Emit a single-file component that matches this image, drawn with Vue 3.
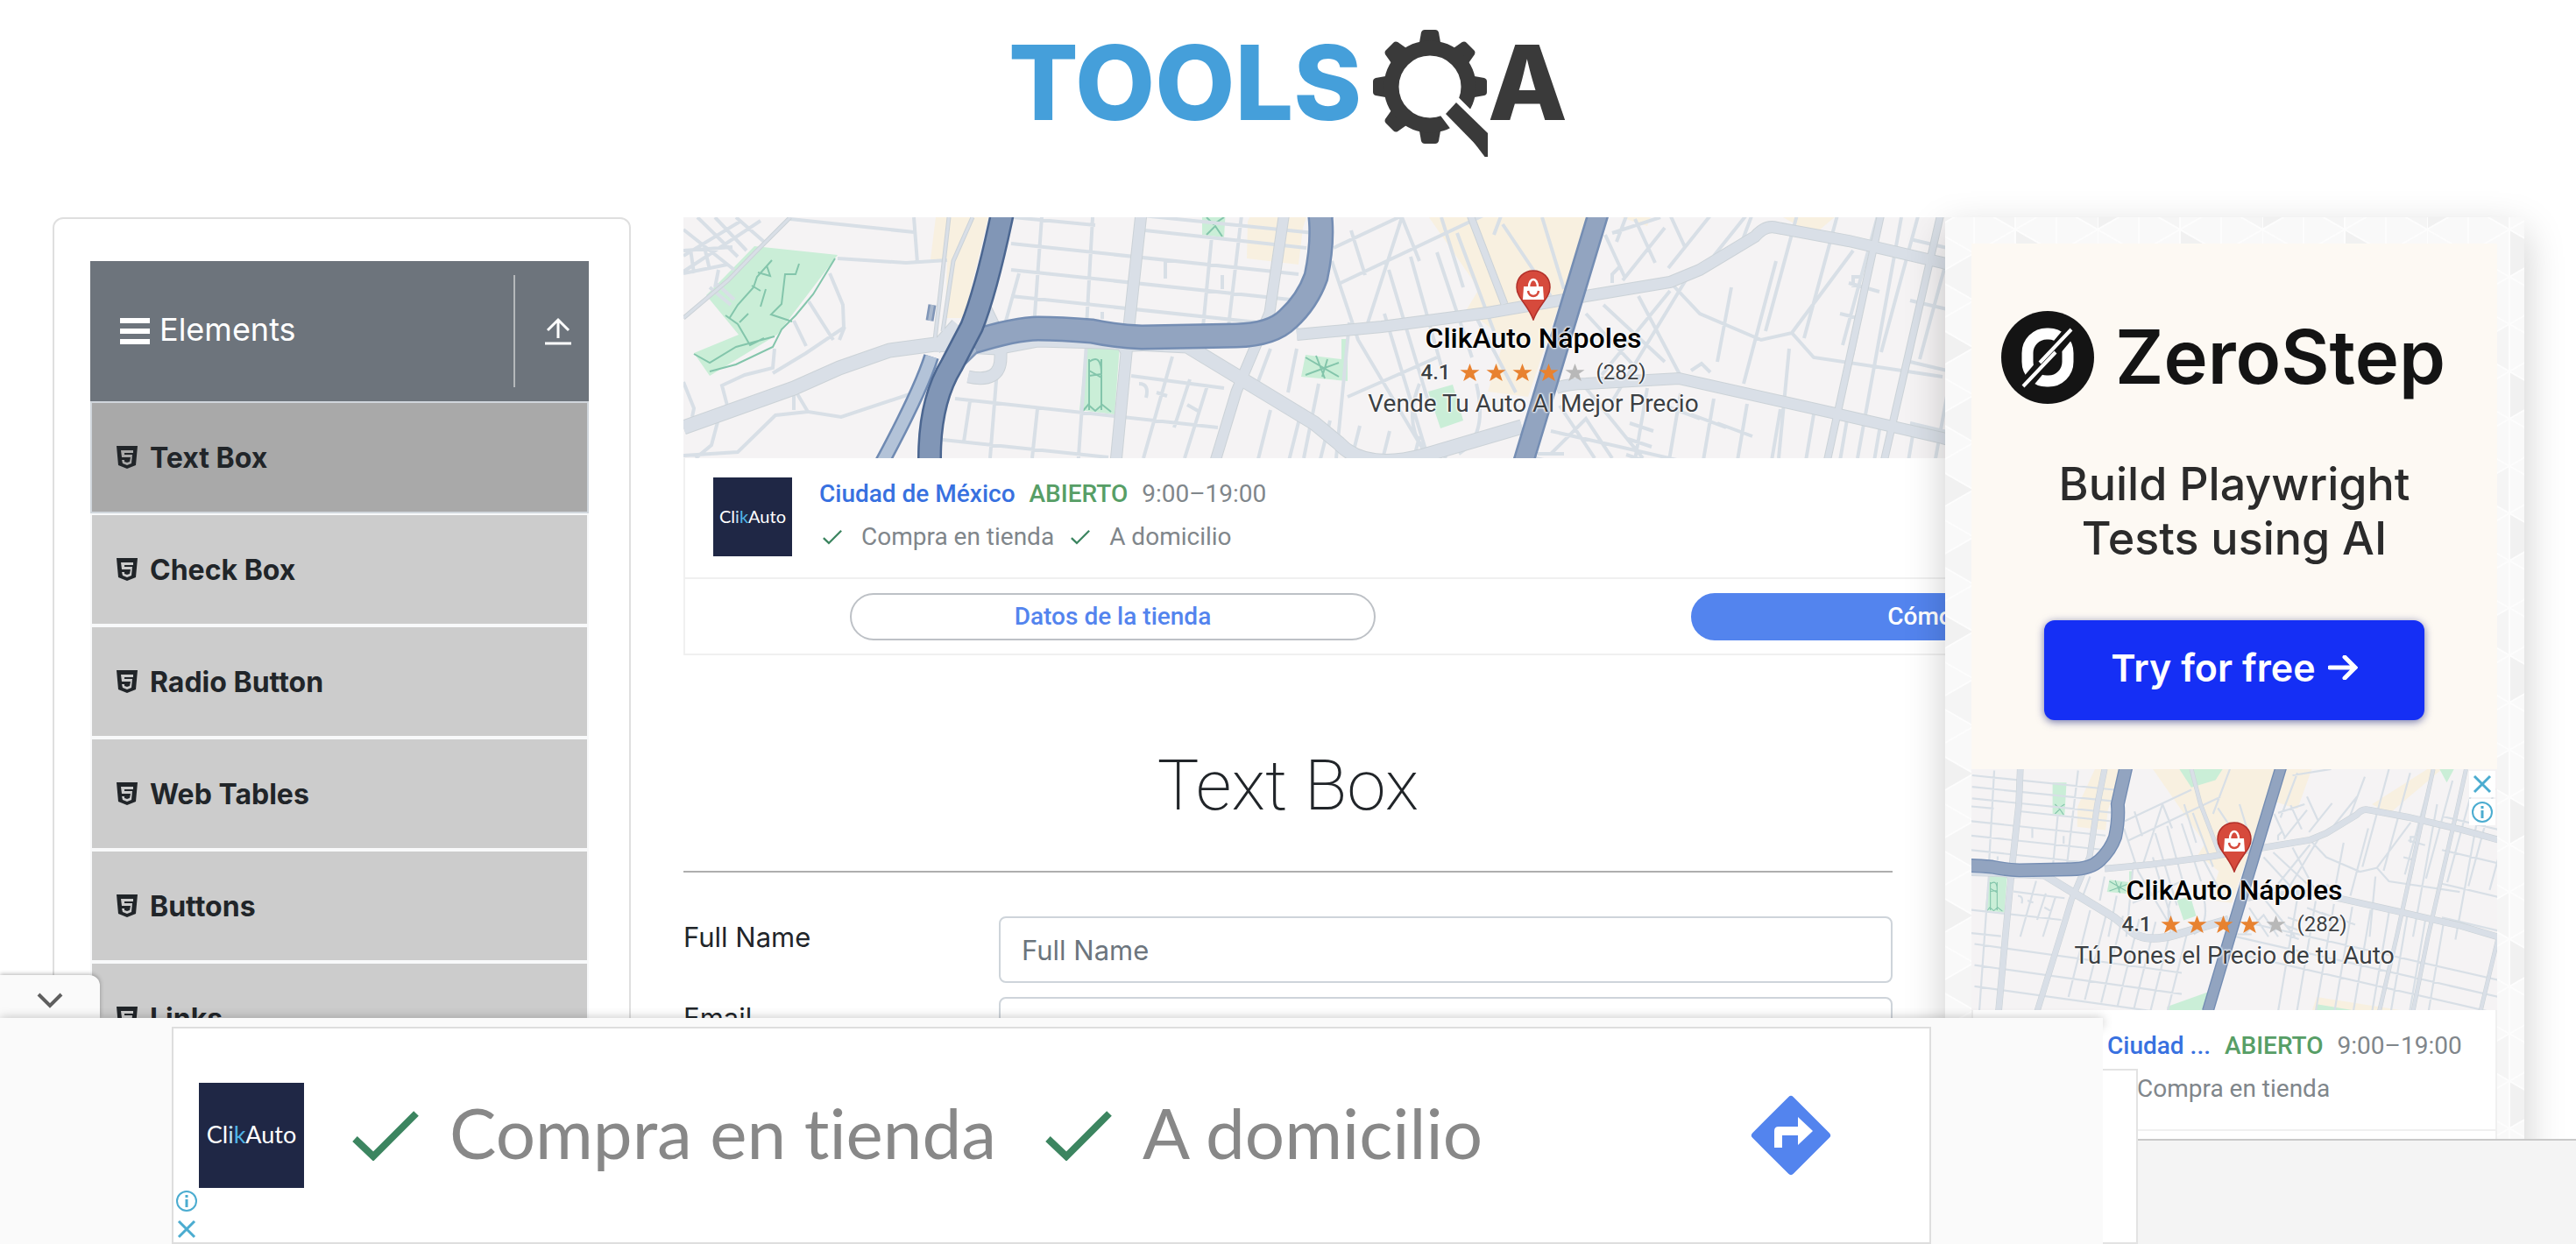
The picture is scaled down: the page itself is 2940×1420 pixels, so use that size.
<script setup>
import { ref } from 'vue'

const menu = ['Text Box', 'Check Box', 'Radio Button', 'Web Tables', 'Buttons', 'Links']
const active = ref('Text Box')
const fullName = ref('')
const email = ref('')

const maps = [
  { id: 'wide', box: '0 0 1940 275', move: '' },
  { id: 'small', box: '0 0 600 275', move: 'translate(-233 40) scale(.55)' },
]

// A run of parallel streets, each one shifted from the first by (dx, dy).
function run(x1, y1, x2, y2, dx, dy, count) {
  let d = ''
  for (let i = 0; i < count; i++) {
    d += `M${x1 + dx * i} ${y1 + dy * i}L${x2 + dx * i} ${y2 + dy * i}`
  }
  return d
}

const parks = [
  'M81 33L176 43 107 134 30 181 12 155 63 134 26 89 46 69Z',
  'M460 144L498 146 492 225 452 220Z',
  'M592 -45H621L617 23 592 20Z',
  'M710 157L751 162V139H758V187L705 182Z',
  'M850 199L878 191 890 232 864 241Z',
  'M855 -73H945L930 -50 880 -35Z',
  'M830 420L928 385 915 430H830Z',
  'M1395 -73H1425L1410 -45Z',
  'M1140 415L1230 430H1140Z',
]
const beige = [
  'M288 0H348L320 115H299L301 49 282 48Z',
  'M644 5L680 -73H735L707 12 702 54 643 47Z',
  'M800 -73H1058L964 205 918 199 937 139 894 105 908 82Z',
  'M1060 -73H1130L1100 10 1040 -10Z',
  'M1255 0L1370 -73H1400L1290 20Z',
  'M1140 400L1330 430H1130Z',
]
const trails =
  'M101 49L84 68 80 80 62 100 52 116M95 55l4 12-14-4M173 47L148 88 128 112 112 128 102 148 60 168 30 176M12 156L30 166 60 148 104 136M132 53l-4 12-12 0-4 34-12 12 24 8M48 112L62 122 76 146 92 138M78 78l10 6M94 82l-6 20M64 120l10-10M463 162V220M477 162V220M463 175l14 8M463 165q14-10 14 14l-14 2M456 221l6-7 8 7 8-7 10 8M597 0l8 8 12-8M597 20l10-10 8 12M710 160l38 22M748 166l-38 14M722 158l10 26M735 162l-6 20'
const streets = [
  'M122 2L263 17M263 0L267 52M176 47L254 52 301 49M167 64L182 100 183 126 140 155 102 178M143 96L171 140M126 118L140 147M0 14L58 60M16 0L62 45M36 0L72 38M60 0L92 28M0 44L66 4M0 62L88 4M0 38L56 34M12 64L8 36M30 60L24 34M0 64L50 54M30 80L54 100M36 74L58 94M40 60L36 80M0 188L12 218 10 228M184 125L178 140',
  'M126 195L142 222 180 228 270 198M142 222L105 226 62 268 0 272M40 230L32 260 14 275M50 215L44 192 70 180 102 172 104 150M126 195V220',
  run(374, 30, 702, 65, 0, 30, 3),
  'M376 0L470 9M527 15L711 35M414 -70L400 125M471 -70L460 125M603 22L593 125M645 -70L622 125M383 64L367 122M550 70V50M615 82V66M478 108v8',
  run(425, -60, 720, -30, 0, 24, 3),
  'M310 207L610 240M296 254L485 274M511 181L617 195M360 149L350 275M327 210L320 256M404 219L398 275M460 144L440 430M558 159L525 275M598 192L572 275M578 185L560 240M540 200l12 4M575 214l14 8M520 190q12 0 8 16',
  run(670, 220, 625, 400, 34, 6, 7),
  run(430, 290, 860, 350, 0, 44, 3),
  'M670 150L655 190M700 150L690 200M742 35L880 -30M750 75L940 -15M762 15L778 66M740 50L770 140 850 275M778 130L820 0M820 0L840 50M805 60L850 210M830 45L865 170M860 40L900 160M883 18L925 130M800 110L850 275M760 120L745 275M725 190L708 275M865 0L890 80M935 8L990 90M980 0L1005 82M900 105L950 200M758 205L860 160M840 190q-20 50 10 80M905 190q14 60-20 80M1060 18L1115 0M1090 -60L1170 -73',
  run(1052, 20, 1075, 70, 34, -18, 3),
  'M1126 74L1160 110 1230 140 1265 132 1290 160 1437 182M1265 132L1335 38M1262 150L1250 275M1126 84L1048 180M1050 100L1120 165M1030 110L1090 175M1090 90L1140 185M1145 70L1060 210M1060 75v-10l10-10',
  run(1120, 12, 1072, 72, 52, -14, 3),
  run(1100, 195, 1060, 430, 38, 6, 9),
  run(1080, 235, 1107, 244, -2, 18, 3),
  run(1120, 215, 1160, 230, 30, 10, 3),
  'M990 270L1030 230 1060 275M1000 215L1040 275M1030 195L1095 275M975 270h30M1196 80L1180 165M1247 50L1210 190M1330 75l35 10M1320 110l25 6M1340 130l-6 28M1335 80v-12h10M1150 175l12-8 10 10',
  run(1290, -73, 1235, 130, 44, 8, 8),
  run(1390, 0, 1340, 275, 88, 6, 7),
  run(1400, 25, 1930, 150, 0, 70, 4),
  run(930, 300, 1540, 440, 30, -28, 3),
  run(960, -73, 925, 20, 140, 8, 3),
].join('')

const greyRoads = [
  { d: 'M0 240L126 195 178 172 235 152 287 145 357 149 405 140 475 142 575 147 720 235 748 258Q778 290 845 272L957 239', w: 17 },
  { d: 'M287 150L312 122M345 105L362 140 362 160Q362 190 325 182', w: 15 },
  { d: 'M525 -73L522 0 508 129 494 275 480 430', w: 14 },
  { d: 'M700 -73L685 0 669 109 631 199 608 275 560 430', w: 13 },
  { d: 'M575 147L500 150 506 160', w: 8 },
  { d: 'M700 134L797 125 918 109 1000 95 1126 74 1160 60 1223 22Q1235 8 1248 12L1330 27 1437 52 1940 190', w: 14 },
  { d: 'M996 195Q1010 190 1030 190L1136 184 1306 222 1437 252 1600 300', w: 14 },
  { d: 'M1382 -73L1366 0 1306 275 1270 430', w: 9 },
  { d: 'M1450 -73L1434 0 1371 275 1340 430M1600 -73L1480 430', w: 9 },
  { d: 'M880 -73L899 0 937 99', w: 9 },
  { d: 'M122 0L82 40 51 72 0 115M303 0L287 140M330 0L308 50 296 130', w: 5 },
]
const highways = [
  { d: 'M283 159Q270 200 224 285', w: 18, edge: '#6f8ab2', fill: '#b3c3d8' },
  { d: 'M284 100L281 118M312 172L345 140', w: 9, edge: '#7f95b7', fill: '#a9b8cd' },
  { d: 'M331 142Q380 127 405 127T466 130Q495 136 523 137L631 135Q672 134 690 116 712 96 722 68 730 30 727 0L745 -80', w: 29, edge: '#748db3', fill: '#92a4c0' },
  { d: 'M1067 -80L960 275 914 430', w: 25, edge: '#748db3', fill: '#92a4c0' },
  { d: 'M376 -73L363 0Q345 85 329 125L306 169Q281 210 281 275V430', w: 28, edge: '#4b6690', fill: '#8196b6' },
]
const html5 =
  'M0 0H24L22 22 12 26 2 22ZM5 5L6 13H16L15 18 12 19 9 18V16H6L7 20 12 22 17 20 18 10H9V8H19V5Z'
</script>

<template>
  <div class="page">
    <svg class="defs" width="0" height="0" aria-hidden="true">
      <defs>
        <g id="city">
          <rect x="-100" y="-100" width="2200" height="600" fill="#f5f3f4" />
          <path v-for="d in beige" :key="d" :d="d" fill="#f8f0e0" />
          <path v-for="d in parks" :key="d" :d="d" fill="#caeed7" />
          <path :d="trails" fill="none" stroke="#83c5ab" stroke-width="2" />
          <path :d="streets" fill="none" stroke="#d8dfe6" stroke-width="4" />
          <path v-for="r in greyRoads" :key="r.d" :d="r.d" fill="none" stroke="#cbd2d7" :stroke-width="r.w" />
          <path v-for="r in greyRoads" :key="r.d + 'f'" :d="r.d" fill="none" stroke="#d9dfe7" :stroke-width="r.w - 2" />
          <template v-for="r in highways" :key="r.d">
            <path :d="r.d" fill="none" :stroke="r.edge" :stroke-width="r.w" />
            <path :d="r.d" fill="none" :stroke="r.fill" :stroke-width="r.w - 5" />
          </template>
        </g>
        <symbol id="pin" viewBox="0 0 40 58">
          <path d="M20 1C9 1 1 9 1 20c0 12 13 20 19 37 6-17 19-25 19-37C39 9 31 1 20 1Z" fill="#d64a3c" stroke="#b1302a" stroke-width="1.500" />
          <path d="M9 19H31L32 34H8Z" fill="#fff" />
          <path d="M15 20C15 8 25 8 25 20" fill="none" stroke="#fff" stroke-width="2.500" />
          <path d="M14 24C15 32 25 32 26 24" fill="none" stroke="#d64a3c" stroke-width="2.500" />
        </symbol>
        <symbol id="star" viewBox="0 0 24 24">
          <path d="M12 1l3 8h9l-7 5 3 9-8-5-8 5 3-9-7-5h9z" />
        </symbol>
        <symbol id="tick" viewBox="0 0 76 58">
          <path d="M3 33L24 53 73 4" fill="none" stroke="#3c8560" stroke-width="8" />
        </symbol>
        <symbol id="info" viewBox="0 0 24 24">
          <circle cx="12" cy="12" r="11" fill="none" stroke="#4bacd0" stroke-width="2" />
          <path d="M12 10v9M12 5v3" stroke="#4bacd0" stroke-width="3" />
        </symbol>
        <symbol id="cross" viewBox="0 0 24 24">
          <path d="M3 3L21 21M21 3L3 21" stroke="#4bacd0" stroke-width="3" />
        </symbol>
      </defs>
    </svg>

    <header class="top">
      <a class="brand" href="#" aria-label="TOOLSQA">
        <span class="tools">TOOLS</span>
        <svg class="gear" viewBox="0 0 132 145" width="132" height="145">
          <g fill="#3a3a3a">
            <path
              v-for="a in 8"
              :key="a"
              d="M53 20L56 3Q57 0 60 0H72Q75 0 76 3L79 20Z"
              :transform="`rotate(${a * 45} 66 65)`"
            />
          </g>
          <circle cx="66" cy="65" r="44" fill="none" stroke="#3a3a3a" stroke-width="17" />
          <path d="M96 83L140 127V170L84 96Z" fill="#3a3a3a" stroke="#fff" stroke-width="12" />
          <path d="M96 83L132 118V145L84 96Z" fill="#3a3a3a" />
        </svg>
        <span class="last">A</span>
      </a>
    </header>

    <main class="columns">
      <nav class="panel">
        <button class="group" type="button">
          <svg viewBox="0 0 34 30" width="34" height="30"><path d="M0 3H34M0 15H34M0 27H34" stroke="#fff" stroke-width="6" /></svg>
          <span class="group-name">Elements</span>
          <span class="group-toggle">
            <svg viewBox="0 0 30 32" width="30" height="32"><path d="M15 24V3M3 15L15 3 27 15M0 30H30" fill="none" stroke="#fff" stroke-width="3" /></svg>
          </span>
        </button>
        <ul class="menu">
          <li v-for="m in menu" :key="m" :class="{ on: m === active }">
            <a href="#" @click.prevent="active = m">
              <svg viewBox="0 0 24 26" width="24" height="26"><path :d="html5" fill="#212529" fill-rule="evenodd" /></svg>
              {{ m }}
            </a>
          </li>
        </ul>
      </nav>

      <section class="content">
        <article class="ad wide">
          <div class="map">
            <svg class="streets" :viewBox="maps[0].box" preserveAspectRatio="xMidYMin slice"><use href="#city" /></svg>
            <div class="place">
              <svg width="40" height="58"><use href="#pin" /></svg>
              <strong>ClikAuto Nápoles</strong>
              <span class="rating">
                <b>4.1</b>
                <svg v-for="s in 5" :key="s" :class="['star', { off: s === 5 }]" width="23" height="22"><use href="#star" /></svg>
                <i>(282)</i>
              </span>
              <span class="slogan">Vende Tu Auto Al Mejor Precio</span>
            </div>
          </div>
          <div class="shop">
            <div class="clik">Cl<em>i</em><em>k</em>Auto</div>
            <div class="facts">
              <p><a class="city" href="#">Ciudad de México</a><b class="open">ABIERTO</b><span>9:00–19:00</span></p>
              <p class="services">
                <svg class="tick" width="22" height="20"><use href="#tick" /></svg><span>Compra en tienda</span>
                <svg class="tick" width="22" height="20"><use href="#tick" /></svg><span>A domicilio</span>
              </p>
            </div>
          </div>
          <div class="actions">
            <button class="pill" type="button">Datos de la tienda</button>
            <button class="pill solid" type="button">Cómo llegar</button>
          </div>
        </article>

        <h1>Text Box</h1>
        <form class="form" @submit.prevent>
          <label for="full-name">Full Name</label>
          <input id="full-name" v-model="fullName" type="text" placeholder="Full Name" />
          <label for="email">Email</label>
          <input id="email" v-model="email" type="email" />
        </form>
      </section>

      <aside class="side">
        <svg class="weave" width="100%" height="100%" aria-hidden="true">
          <defs>
            <pattern id="tri" width="188" height="162" patternUnits="userSpaceOnUse" x="-14" y="-40">
              <rect width="188" height="162" fill="#f9f9f9" />
              <path d="M0 0L47 27 0 54ZM94 54L141 81 94 108ZM188 108L141 135 188 162Z" fill="#f1f1f1" />
              <path d="M94 0L47 27 94 54ZM0 108L47 81V135ZM141 27L188 0V54Z" fill="#f5f5f5" />
              <path
                d="M0 0V162M47 0V162M94 0V162M141 0V162M0 0L188 108M0 54L188 162M0 108L94 162M94 0L188 54M188 0L0 108M188 54L0 162M188 108L94 162M94 0L0 54"
                stroke="#fdfdfd"
                stroke-width="2"
                fill="none"
              />
            </pattern>
          </defs>
          <rect width="100%" height="100%" fill="url(#tri)" />
        </svg>
        <div class="stack">
          <article class="zero">
            <div class="zero-brand">
              <svg viewBox="0 0 106 108" width="106" height="108">
                <circle cx="53" cy="54" r="53" fill="#141414" />
                <rect x="30" y="27" width="46" height="54" rx="22" fill="none" stroke="#fff" stroke-width="13" />
                <path d="M22 92L84 18" stroke="#141414" stroke-width="15" />
                <path d="M25 87L62 48M44 60L80 22" stroke="#fff" stroke-width="4" />
              </svg>
              <span>ZeroStep</span>
            </div>
            <p>Build Playwright<br />Tests using AI</p>
            <button type="button">
              Try for free
              <svg viewBox="0 0 34 28" width="34" height="28"><path d="M2 14H31M19 2L31 14 19 26" fill="none" stroke="#fff" stroke-width="5" stroke-linecap="round" /></svg>
            </button>
          </article>
          <article class="ad">
            <div class="map">
              <svg class="streets" :viewBox="maps[1].box" preserveAspectRatio="xMidYMin slice"><use href="#city" :transform="maps[1].move" /></svg>
              <div class="place">
                <svg width="40" height="58"><use href="#pin" /></svg>
                <strong>ClikAuto Nápoles</strong>
                <span class="rating">
                  <b>4.1</b>
                  <svg v-for="s in 5" :key="s" :class="['star', { off: s === 5 }]" width="23" height="22"><use href="#star" /></svg>
                  <i>(282)</i>
                </span>
                <span class="slogan">Tú Pones el Precio de tu Auto</span>
              </div>
              <div class="choices">
                <button type="button" aria-label="Cerrar"><svg width="24" height="24"><use href="#cross" /></svg></button>
                <button type="button" aria-label="Información"><svg width="24" height="24"><use href="#info" /></svg></button>
              </div>
            </div>
            <div class="shop">
              <div class="clik">Cl<em>i</em><em>k</em>Auto</div>
              <div class="facts">
                <p><a class="city" href="#">Ciudad ...</a><b class="open">ABIERTO</b><span>9:00–19:00</span></p>
                <p class="services tight">
                  <svg class="tick" width="22" height="20"><use href="#tick" /></svg><span>Compra en tienda</span>
                </p>
              </div>
            </div>
            <div class="actions"></div>
          </article>
        </div>
      </aside>
    </main>

    <footer class="foot"></footer>

    <div class="dock">
      <div class="behind"></div>
      <button class="fold" type="button" aria-label="Ocultar anuncio">
        <svg viewBox="0 0 30 18" width="30" height="18"><path d="M2 2L15 15 28 2" fill="none" stroke="#5f5f5f" stroke-width="4" /></svg>
      </button>
      <div class="lip"></div>
      <div class="tray">
        <article class="banner">
          <div class="clik big">Cl<em>i</em><em>k</em>Auto</div>
          <svg width="76" height="58"><use href="#tick" /></svg>
          <span class="first">Compra en tienda</span>
          <svg width="76" height="58"><use href="#tick" /></svg>
          <span>A domicilio</span>
          <a class="route" href="#" aria-label="Cómo llegar">
            <svg viewBox="0 0 92 92" width="92" height="92">
              <rect x="13" y="13" width="66" height="66" rx="4" fill="#5384ee" transform="rotate(45 46 46)" />
              <path d="M27 60V41Q27 36 32 36H54V25L71 41 54 57V46H36V60Z" fill="#fff" />
            </svg>
          </a>
          <div class="choices low">
            <button type="button" aria-label="Información"><svg width="24" height="24"><use href="#info" /></svg></button>
            <button type="button" aria-label="Cerrar"><svg width="24" height="24"><use href="#cross" /></svg></button>
          </div>
        </article>
      </div>
    </div>
  </div>
</template>

<style>
body { background: #fff; }
</style>

<style scoped>
* { box-sizing: border-box; }
.page { position: relative; height: 100vh; overflow: hidden; font-family: Inter, "Liberation Sans", sans-serif; color: #212529; }
.defs { position: absolute; }
button { font: inherit; border: 0; margin: 0; padding: 0; cursor: pointer; }
a { color: inherit; text-decoration: none; }
p { margin: 0; }
svg { display: block; flex: none; }

.top { display: flex; justify-content: center; height: 248px; padding-top: 34px; }
.brand { display: flex; align-items: flex-start; height: 145px; font-weight: 800; font-size: 118px; line-height: 120px; color: #3a3a3a; }
.tools { color: #459fda; margin-right: 12px; }

.columns { display: grid; grid-template-columns: 660px minmax(0, 1fr) 661px; gap: 60px; padding: 0 59px 0 60px; }
.panel { height: 1200px; padding: 48px 46px 0 41px; border: 2px solid #dfdfdf; border-radius: 12px; }
.group { display: flex; align-items: center; width: 100%; height: 160px; padding: 0 20px 0 34px; background: #6d747c; color: #fff; }
.group-name { margin: 0 0 4px 11px; font-size: 36px; line-height: 44px; }
.group-toggle { display: flex; align-items: center; height: 128px; margin-left: auto; padding-left: 34px; border-left: 2px solid #b5b8bb; }
.menu { list-style: none; margin: 0; padding: 0; }
.menu li { height: 128px; border: 2px solid #f8f9fa; background: #ccc; }
.menu li.on { border-color: #d0d6dc; background: #a9a9a9; }
.menu a { display: flex; align-items: center; gap: 14px; height: 100%; padding-left: 28px; font-size: 32px; font-weight: 650; }

.content { min-width: 0; }
.ad { position: relative; height: 500px; background: #fff; font-family: Roboto, "Liberation Sans", sans-serif; }
.ad.wide { width: 1940px; }
.map { position: relative; height: 275px; overflow: hidden; }
.streets { width: 100%; height: 275px; }
.place { position: absolute; inset: 60px 0 auto; display: flex; flex-direction: column; align-items: center; color: #3c4043; text-shadow: 0 0 3px #fff, 0 0 3px #fff, 0 0 2px #fff, 0 0 2px #fff; }
.place strong { margin-top: 2px; font-size: 32px; line-height: 36px; font-weight: 500; color: #000; }
.rating { display: flex; align-items: center; gap: 7px; margin-top: 6px; font-size: 24px; line-height: 30px; }
.rating b { margin-right: 4px; font-weight: 500; }
.rating i { margin-left: 5px; font-style: normal; }
.star { fill: #e88230; }
.star.off { fill: #b8b8b8; }
.slogan { margin-top: 4px; font-size: 28px; line-height: 34px; }
.shop { display: flex; height: 136px; padding: 22px 0 0 32px; border: solid #f0f0f0; border-width: 0 2px; }
.clik { flex: none; width: 90px; height: 90px; background: #1f2745; color: #fff; font-family: Lato, sans-serif; font-size: 20px; line-height: 88px; text-align: center; }
.clik em { font-style: normal; color: #4fb4e6; }
.clik em:first-of-type { color: #b9dff2; }
.facts { display: grid; align-content: start; gap: 17px; margin-left: 31px; padding-top: 3px; font-size: 28px; line-height: 32px; color: #80868b; }
.facts p { display: flex; align-items: center; }
.city { color: #3871e0; font-weight: 500; }
.open { margin: 0 16px; color: #579e66; font-weight: 500; }
.tick { margin: 0 22px 0 4px; }
.services span { margin-right: 15px; }
.tight .tick { margin-right: 8px; }
.actions { display: flex; justify-content: space-between; align-items: center; height: 89px; padding: 0 188px; border: 2px solid #f0f0f0; }
.pill { width: 600px; height: 54px; border: 2px solid #bdc1c6; border-radius: 27px; background: #fff; color: #5384ee; font-size: 28px; font-weight: 500; line-height: 32px; }
.pill.solid { border-color: #5384ee; background: #5384ee; color: #fff; }

h1 { margin: 101px 0 0; padding-bottom: 49px; border-bottom: 2px solid #aeaeae; font-family: Roboto, "Liberation Sans", sans-serif; font-size: 80px; line-height: 96px; font-weight: 200; text-align: center; }
.form { display: grid; grid-template-columns: 360px minmax(0, 1fr); row-gap: 16px; margin-top: 50px; font-size: 31px; }
.form label { line-height: 48px; }
.form input { height: 76px; padding: 0 24px; border: 2px solid #ced4da; border-radius: 8px; background: #fff; font: inherit; color: #495057; }
.form input::placeholder { color: #6c757d; opacity: 1; }

.side { position: relative; height: 1200px; padding: 30px 31px 0 30px; background: #f9f9f9; box-shadow: 0 16px 44px rgba(0, 0, 0, 0.2); }
.weave { position: absolute; inset: 0; }
.stack { position: relative; }
.zero { display: flex; flex-direction: column; align-items: center; height: 600px; padding-top: 76px; background: #fdf9f3; color: #141414; }
.zero-brand { display: flex; align-items: center; gap: 24px; width: 100%; padding-left: 34px; font-size: 85px; line-height: 108px; font-weight: 600; }
.zero p { margin-top: 60px; font-size: 52px; line-height: 62px; font-weight: 500; color: #2b2b2b; text-align: center; }
.zero button { display: flex; align-items: center; justify-content: center; gap: 14px; width: 434px; height: 114px; margin-top: 62px; padding-bottom: 6px; border-radius: 12px; background: #152ff5; box-shadow: 0 2px 10px rgba(20, 30, 120, 0.6); color: #fff; font-size: 43px; font-weight: 600; }
.choices { position: absolute; top: 2px; right: 2px; display: grid; gap: 2px; }
.choices button { display: grid; place-items: center; width: 30px; height: 30px; background: #fff; }

.foot { position: fixed; inset: auto 0 0; height: 120px; border-top: 2px solid #c9c9c9; background: #f4f4f4; }
.dock { position: fixed; left: 0; right: 540px; bottom: 0; }
.behind { position: absolute; right: -40px; bottom: 0; width: 200px; height: 200px; border: 2px solid #e3e3e3; background: #fff; }
.fold { position: relative; display: grid; place-items: center; width: 114px; height: 49px; padding-top: 8px; border-radius: 0 12px 0 0; background: #fafafa; box-shadow: 0 -1px 5px rgba(0, 0, 0, 0.3); }
.lip { position: relative; height: 10px; background: #fafafa; box-shadow: 0 0 12px rgba(0, 0, 0, 0.25); }
.tray { position: relative; height: 248px; padding: 0 196px; background: #fafafa; }
.tray::before { content: ""; position: absolute; inset: -10px 0 auto; height: 10px; background: #fafafa; }
.banner { position: relative; display: flex; align-items: center; height: 248px; padding: 0 112px 0 29px; border: 2px solid #dedede; background: #fff; color: #888; font-family: Lato, sans-serif; font-size: 80px; line-height: 96px; white-space: nowrap; font-variant-ligatures: none; }
.clik.big { width: 120px; height: 120px; margin-right: 55px; font-size: 27px; line-height: 118px; }
.banner span { margin-left: 35px; padding-bottom: 8px; }
.banner .first { margin-right: 56px; }
.route { margin-left: auto; }
.choices.low { inset: auto auto 0 0; }
</style>
